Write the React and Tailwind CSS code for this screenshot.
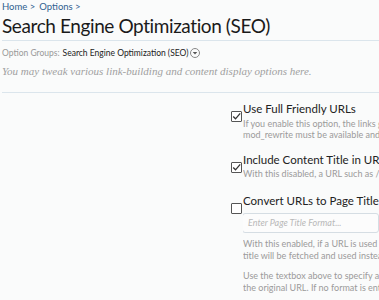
import React from "react";

const ui = { fontFamily: "Lato, 'Open Sans', sans-serif" };

function Check({ checked }) {
  return (
    <span className="relative inline-block w-[11px] h-[11px] border border-[#555] rounded-[1px] bg-white shrink-0">
      {checked && (
        <svg viewBox="0 0 11 11" className="absolute left-[-1px] top-[-1px] w-[11px] h-[11px]">
          <path d="M2.2 5.5 L4.5 7.8 L9.2 2.3" fill="none" stroke="#333" strokeWidth="1.3" />
        </svg>
      )}
    </span>
  );
}

function Option({ checked, label, children }) {
  return (
    <div className="flex">
      <div className="w-[12px] shrink-0 pt-[2px]">
        <Check checked={checked} />
      </div>
      <div className="flex-1 min-w-0 overflow-hidden flex flex-col">
        <span className="text-[11.5px] leading-[14px] text-[#222] whitespace-nowrap">{label}</span>
        {children}
      </div>
    </div>
  );
}

export default function App() {
  return (
    <div className="w-[379px] h-[300px] overflow-hidden bg-[#fafbfb]" style={ui}>
      <div className="pl-[2px]">
        <div className="flex gap-[2px] text-[9.5px] leading-[12px] pt-[1px] text-[#2f6190]">
          <span>Home &gt;</span>
          <span className="ml-[2px]">Options &gt;</span>
        </div>
        <h1 className="text-[19px] leading-[26px] text-[#1a1a1a] whitespace-nowrap tracking-[-0.4px]">
          Search Engine Optimization (SEO)
        </h1>
        <div className="border-b border-[#dbe5ec] mt-[1px]"></div>
        <div className="flex items-center text-[8.5px] leading-[12px] mt-[6px] whitespace-nowrap">
          <span className="text-[#999]">Option Groups:</span>
          <span className="text-[#222] ml-[3px]">Search Engine Optimization (SEO)</span>
          <span className="ml-[2px] inline-flex items-center justify-center w-[10px] h-[10px] rounded-full border border-[#888]">
            <svg viewBox="0 0 8 8" className="w-[6px] h-[6px]"><path d="M1 2.5 L7 2.5 L4 6 Z" fill="#555" /></svg>
          </span>
        </div>
        <div
          className="text-[11px] leading-[16px] text-[#a0a0a0] italic mt-[4px] whitespace-nowrap"
          style={{ fontFamily: "'Liberation Serif', serif" }}
        >
          You may tweak various link-building and content display options here.
        </div>
        <div className="border-b border-[#dbe5ec] mt-[13px]"></div>
      </div>
      <div className="flex">
        <div className="w-[231px] shrink-0"></div>
        <div className="flex-1 min-w-0 overflow-hidden flex flex-col pt-[9px]">
          <Option checked label="Use Full Friendly URLs">
            <div className="text-[9px] leading-[11px] text-[#9a9a9a] whitespace-nowrap mt-[2px]">
              If you enable this option, the links generated
              <br />
              mod_rewrite must be available and an
            </div>
          </Option>
          <div className="h-[13px]"></div>
          <Option checked label="Include Content Title in URLs">
            <div className="text-[9px] leading-[11px] text-[#9a9a9a] whitespace-nowrap mt-[1px]">
              With this disabled, a URL such as /threads/
            </div>
          </Option>
          <div className="h-[15px]"></div>
          <Option label="Convert URLs to Page Titles">
            <div className="mt-[5px] -ml-[1px] h-[20px] border border-[#d5dde3] bg-[#fcfcfc] rounded-[3px] flex items-center pl-[5px]">
              <span className="text-[9px] italic text-[#b8b8b8] whitespace-nowrap">Enter Page Title Format...</span>
            </div>
            <div className="text-[9px] leading-[12px] text-[#9a9a9a] whitespace-nowrap mt-[5px]">
              With this enabled, if a URL is used inside a message,
              <br />
              title will be fetched and used instead.
            </div>
            <div className="text-[9px] leading-[12px] text-[#9a9a9a] whitespace-nowrap mt-[8px]">
              Use the textbox above to specify a format for
              <br />
              the original URL. If no format is entered
            </div>
          </Option>
        </div>
      </div>
    </div>
  );
}
